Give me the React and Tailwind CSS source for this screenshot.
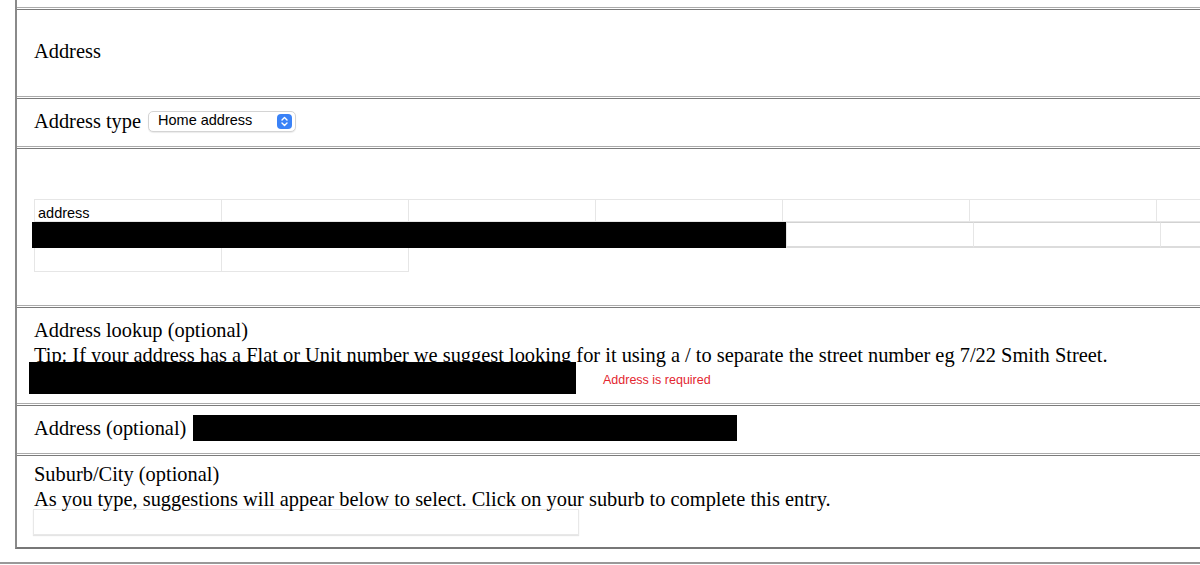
import React from "react";

function Row({ className, children }) {
  return (
    <div className="border-t border-[#ababab] pt-px">
      <div className={`border-t border-[#7b7b7b] pl-[17px] ${className}`}>
        {children}
      </div>
    </div>
  );
}

function Cell({ className = "", children }) {
  return (
    <div
      className={`w-[188px] shrink-0 border border-[#e6e6e6] -ml-px first:ml-0 ${className}`}
    >
      {children}
    </div>
  );
}

function SelectArrows() {
  return (
    <div className="w-[15px] h-[15px] rounded-[4px] bg-[#3a82f7] flex items-center justify-center">
      <svg width="9" height="11" viewBox="0 0 9 11" fill="none">
        <path
          d="M2 4 L4.5 1.5 L7 4 M2 7 L4.5 9.5 L7 7"
          stroke="white"
          strokeWidth="1.4"
          strokeLinecap="round"
          strokeLinejoin="round"
        />
      </svg>
    </div>
  );
}

export default function App() {
  return (
    <div className="w-[1200px] h-[565px] overflow-hidden bg-white text-black font-['Liberation_Serif','Times_New_Roman',serif] text-[20.4px]">
      <div className="ml-[15px] border-l-2 border-[#8a8a8a] pt-[7px] border-b-2 border-b-[#777]">
        {/* Address heading */}
        <Row className="h-[87px] flex items-center pb-[4px]">
          <span>Address</span>
        </Row>

        {/* Address type */}
        <Row className="h-[48px] flex items-center pb-[3px]">
          <span>Address type</span>
          <div className="ml-[7px] w-[148px] h-[21px] rounded-[5px] border border-[#d4d4d4] shadow-[0_1px_1px_rgba(0,0,0,0.08)] bg-white flex items-center justify-between pl-[9px] pr-[3px] font-['Liberation_Sans',Arial,sans-serif] text-[14.5px]">
            <span>Home address</span>
            <SelectArrows />
          </div>
        </Row>

        {/* address grid */}
        <Row className="h-[157px] pt-[50px] pl-[16px] font-['Liberation_Sans',Arial,sans-serif] text-[14.5px] overflow-hidden">
          <div className="flex h-[23px]">
            <Cell className="pl-[3px] leading-[26px]">address</Cell>
            <Cell />
            <Cell />
            <Cell />
            <Cell />
            <Cell />
            <Cell />
          </div>
          <div className="flex h-[26px]">
            <div className="w-[755px] shrink-0 -ml-[2px] bg-black" />
            <Cell className="border-t-[#d2d2d2] border-b-2 border-b-[#dcdcdc]" />
            <Cell className="border-t-[#d2d2d2] border-b-2 border-b-[#dcdcdc]" />
            <Cell className="border-t-[#d2d2d2] border-b-2 border-b-[#dcdcdc]" />
          </div>
          <div className="flex h-[24px]">
            <Cell className="border-t-0" />
            <Cell className="border-t-0" />
          </div>
        </Row>

        {/* Address lookup */}
        <Row className="h-[96px] pt-[10px]">
          <div className="leading-[25px]">Address lookup (optional)</div>
          <div className="h-[19px] leading-[24px] whitespace-nowrap">
            Tip: If your address has a Flat or Unit number we suggest looking
            for it using a / to separate the street number eg 7/22 Smith Street.
          </div>
          <div className="flex items-center">
            <div className="-ml-[5px] w-[547px] h-[32px] bg-black" />
            <span className="ml-[27px] pt-[5px] font-['Liberation_Sans',Arial,sans-serif] text-[12.5px] text-[#e3262f]">
              Address is required
            </span>
          </div>
        </Row>

        {/* Address optional */}
        <Row className="h-[48px] flex items-center pb-[3px]">
          <span>Address (optional)</span>
          <div className="ml-[7px] w-[544px] h-[26px] bg-black" />
        </Row>

        {/* Suburb */}
        <Row className="h-[92px] pt-[6px]">
          <div className="leading-[25px]">Suburb/City (optional)</div>
          <div className="h-[22px] leading-[25px] whitespace-nowrap">
            As you type, suggestions will appear below to select. Click on your
            suburb to complete this entry.
          </div>
          <div className="-ml-px w-[546px] h-[26px] border border-[#e8e8e8] shadow-[0_1px_1px_rgba(0,0,0,0.1)] bg-white" />
        </Row>
      </div>
      <div className="mt-[13px] border-t-2 border-[#999]" />
    </div>
  );
}
